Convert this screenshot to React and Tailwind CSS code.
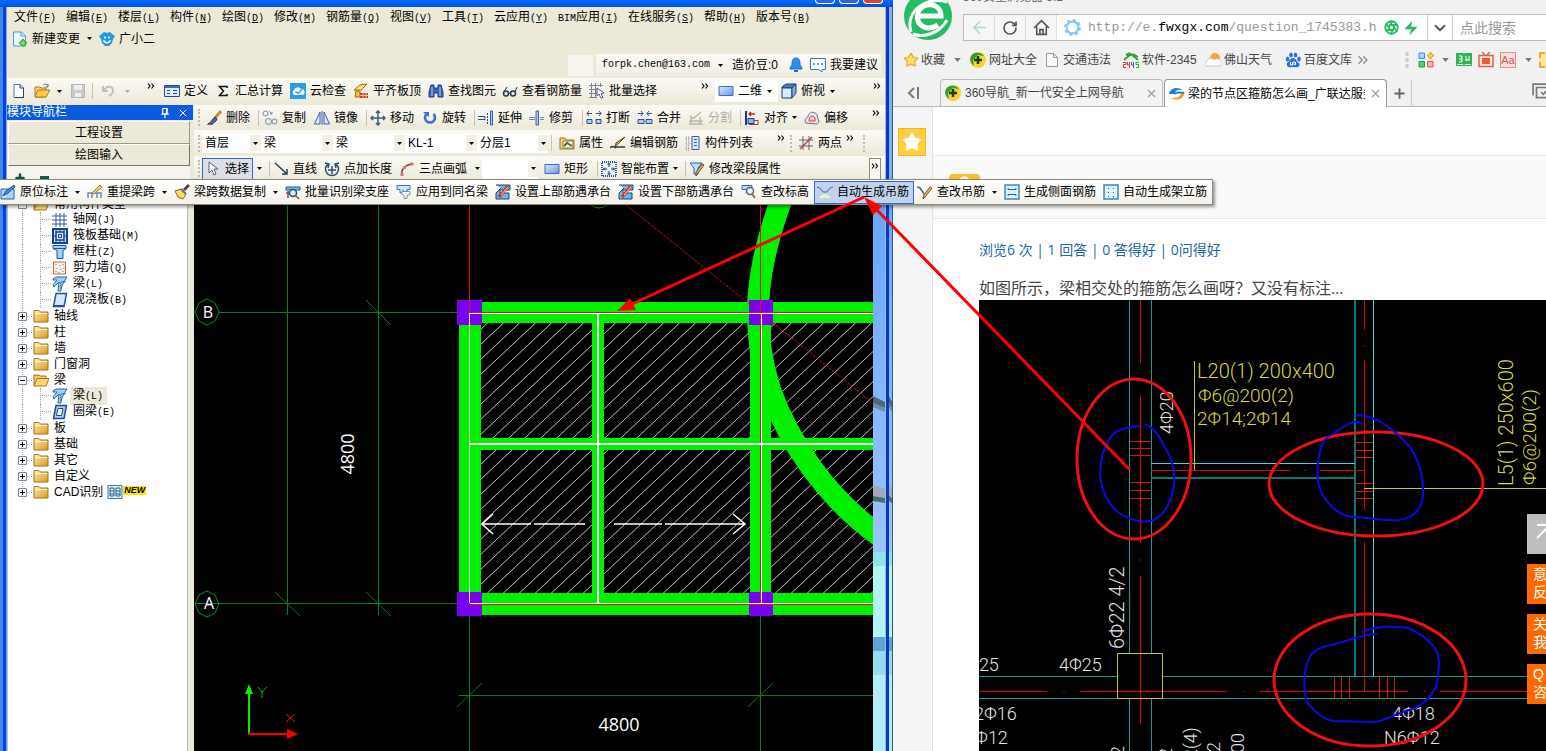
import { RotateCw, House, Star, Plus, X, ChevronDown, ArrowLeft, Settings, Zap, Aperture, ChevronsRight } from 'lucide-react';

const Ico = ({ children, className = 'w-4 h-4' }) => (
    <svg viewBox="0 0 16 16" className={`${className} shrink-0`} fill="none" aria-hidden="true">{children}</svg>
);

const icons = {
    newDoc: <Ico><path d="M1.500 1h8l4 4v10h-12z" fill="#eef6ff" stroke="#4a9ae0" /><path d="M9 1v4h4" stroke="#4a9ae0" /><path d="M11 7.500l4.500 4.500-4.500 4-4.500-4z" fill="#3da52c" /><path d="M11 9.500v5M8.500 12h5" stroke="#8be36a" strokeWidth="1.500" /></Ico>,
    robot: <Ico><path d="M3 3l2-2 3 1 3-1 2 2 3 2-2 3-1 4-3 3H6l-3-3-1-4-2-3z" fill="#1d9be0" /><path d="M6 5.500v2M10 5.500v2" stroke="#fff" strokeWidth="1.500" /><path d="M4.500 9.500c2 3 5 3 7 0" stroke="#fff" strokeWidth="1.500" /></Ico>,
    page: <Ico><path d="M3 1.500h6l3.500 3.500v9.500H3z" fill="#fff" stroke="#5872a8" /><path d="M9 1.500V5h3.500v9.500H4" stroke="#2c4478" /></Ico>,
    open: <Ico><path d="M1 4h5l1 1h5v9H1z" fill="#f7d373" stroke="#a8791c" /><path d="M4 7h12l-4 7H1z" fill="#ffc94c" stroke="#a8791c" /><path d="M9 2c2-1.500 4-1 5 1M14 1v3h-3" stroke="#5478b0" /></Ico>,
    save: <Ico><path d="M1.500 1.500h13v13h-13z" fill="#c9c9c5" stroke="#b4b4b0" /><path d="M4 2h8v5H4zM5 10h6v4H5z" fill="#eee" /></Ico>,
    undo: <Ico><path d="M3 3v5h5M4 7c3-5 9-4 9 1 0 3-2 4-4 5" stroke="#c3c1b8" strokeWidth="2" /></Ico>,
    form: <Ico><path d="M.5 2.500h15v11H.5z" fill="#dcebff" stroke="#27498f" /><path d="M1 3h14v2H1z" fill="#3e6bc0" /><path d="M3 7.500h3M3 10.500h3M9 7.500h4M9 10.500h4" stroke="#27498f" /></Ico>,
    sigma: <Ico><path d="M12 5V3.500H4.500L8.500 8l-4 4.500H12V11" stroke="#111" strokeWidth="1.500" /></Ico>,
    cloud: <Ico><path d="M0 0h16v16H0z" fill="#2a9fe0" /><path d="M4 12a3 3 0 0 1 0-5 4 4 0 0 1 7-1 3 3 0 0 1 1 6z" fill="#fff" /><path d="M5.500 8.500L8 10.500l4-4" stroke="#2a9fe0" strokeWidth="1.500" /></Ico>,
    slab: <Ico><path d="M1 7l6-5 7-1-6 6z" fill="#ffe27a" stroke="#9c6b12" /><path d="M3 8h4v6H2z" fill="#f5c542" stroke="#9c6b12" /><path d="M7 10h8v5H7z" fill="#b5402c" /><path d="M7 12.500h8M10 10v5M13 10v5" stroke="#f3c1a0" /></Ico>,
    binoc: <Ico><path d="M3 2h3v3h4V2h3l2 7v5h-5v-4H6v4H1V9z" fill="#3a63b5" stroke="#1e3d80" /><path d="M4 4v9M12 4v9" stroke="#b9d1ff" /></Ico>,
    glasses: <Ico><circle cx="4" cy="10.500" r="2.500" stroke="#2b3a55" strokeWidth="1.500" /><circle cx="11" cy="10.500" r="2.500" stroke="#2b3a55" strokeWidth="1.500" /><path d="M2 9l3-5M13 9l2-5M6.500 10h2" stroke="#2b3a55" /></Ico>,
    pick: <Ico><path d="M0 2.500h14M0 6.500h8M0 10.500h8M0 14.500h8M2.500 0v15M6.500 0v15M11.500 0v4" stroke="#7b8290" /><path d="M8 5l7 5-3 .5 2 4-2 .5-2-4-2 2z" fill="#fff" stroke="#4c5e87" /></Ico>,
    rect: <Ico><defs><linearGradient id="rg" x2="1" y2="1"><stop stopColor="#dbe8ff" /><stop offset="1" stopColor="#6d95e6" /></linearGradient></defs><path d="M1 3.500h14v9H1z" fill="url(#rg)" stroke="#4068bb" /></Ico>,
    cube: <Ico><path d="M1 4l4-3h10l-4 4H1z" fill="#4b7cc0" stroke="#1f3b66" /><path d="M1 5h10v10H1z" fill="#d3eaff" stroke="#1f3b66" /><path d="M11 5l4-4v9l-4 5z" fill="#7fb2e0" stroke="#1f3b66" /></Ico>,
    brush: <Ico><path d="M15 1L9 8" stroke="#c98e38" strokeWidth="3" /><path d="M9 7l2 2c-1 3-5 6-9 5 3-1 4-5 7-7z" fill="#53639a" stroke="#2c3866" /><path d="M1 14.500h6" stroke="#b05070" /></Ico>,
    copy: <Ico><circle cx="3.500" cy="3.500" r="2.500" stroke="#7386aa" /><circle cx="6.500" cy="11.500" r="3" stroke="#7386aa" /><circle cx="12.500" cy="11.500" r="2.500" stroke="#7386aa" /><path d="M7 1l3 3M10 2v2H8" stroke="#7386aa" /></Ico>,
    mirror: <Ico><path d="M6 2v12H.5zM10 2v12h5.500z" fill="#dce8ff" stroke="#3b5fa8" /><path d="M8 1v14" stroke="#3b5fa8" /></Ico>,
    move: <Ico><path d="M8 1v14M1 8h14M6 3l2-2 2 2M6 13l2 2 2-2M3 6L1 8l2 2M13 6l2 2-2 2" stroke="#44597f" strokeWidth="1.500" /></Ico>,
    rotate: <Ico><path d="M11.500 4a5 5 0 1 1-7 0" stroke="#3d6fc4" strokeWidth="2.500" /><path d="M1 2h6v5z" fill="#3d6fc4" /></Ico>,
    extend: <Ico><path d="M0 6.500h7v3H0" stroke="#274b86" /><path d="M9.500 3v11" stroke="#274b86" strokeDasharray="2 1" /><path d="M12.500 1h2v14h-2z" fill="#9ec3ef" stroke="#3767b3" /></Ico>,
    trim: <Ico><path d="M0 7.500h6M0 9.500h6M11 7.500h4M11 9.500h4" stroke="#6f87a9" /><path d="M7 1h2.500v14H7z" fill="#a9c6e8" stroke="#46658f" /></Ico>,
    split: <Ico><path d="M1 3.500h5M3 1L1 3.500 3 6M10 3.500h5M13 1l2 2.500L13 6" stroke="#2e4f88" /><path d="M1 9.500h5v4H1zM10 9.500h5v4h-5z" fill="#a9cdf5" stroke="#2e4f88" /></Ico>,
    merge: <Ico><path d="M1 3.500h5M4 1l2 2.500L4 6M10 3.500h5M12 1l-2 2.500L12 6" stroke="#2e4f88" /><path d="M1 9.500h6v4H1zM9 9.500h6v4H9z" fill="#a9cdf5" stroke="#2e4f88" /></Ico>,
    cut: <Ico><path d="M1 11h14M1 14h14M3 7v7M12 7v7M5 9l8-7M2 6l4 3" stroke="#b9b7ae" strokeWidth="1.500" /></Ico>,
    align: <Ico><path d="M2 1v14" stroke="#173a8c" strokeWidth="2" /><path d="M5 4h6M7 2L5 4l2 2" stroke="#c02a36" strokeWidth="1.500" /><path d="M4 8.500h6v5H4z" fill="#8fb4ef" stroke="#173a8c" /><path d="M10 10.500h4v4H5" stroke="#c02a36" /></Ico>,
    offset: <Ico><path d="M2 13c-2-3 0-5 2-6 0-4 4-6 7-4 3 1 2 4 3 6 2 3 0 5-2 5z" stroke="#5f6c93" fill="#eee6ee" /><path d="M5 11c0-3 1-5 3-5s4 2 3 5z" stroke="#c04b4b" fill="#f7c4bd" /></Ico>,
    prop: <Ico><path d="M1 3h5l1 2h8v9H1z" fill="#f7d57b" stroke="#9a7431" /><path d="M4 6h10v7H4z" fill="#fffbe8" stroke="#9a7431" /><path d="M5 11l3-3 5 3" stroke="#3a6e40" strokeWidth="2" /></Ico>,
    pen: <Ico><path d="M15 2L8 9l-3 3 1-4z" fill="#d7a755" stroke="#5d4526" /><path d="M0 13c3-4 5 1 7-1h8" stroke="#333" strokeWidth="1.500" /></Ico>,
    list: <Ico><path d="M1 2h3v3H1zM1 7h3v3H1zM1 12h3v3H1z" stroke="#7b8797" strokeDasharray="1 1" /><path d="M7 1.500h7v13H7z" fill="#d8e5fa" stroke="#3c5f9c" /><path d="M9 4.500h3M9 7.500h3M9 10.500h3" stroke="#3c5f9c" /></Ico>,
    points: <Ico><path d="M5 1v14M11 1v14M1 5h14M1 11h14" stroke="#61656f" /><path d="M2 14L14 2" stroke="#b84040" strokeWidth="1.500" /></Ico>,
    cursor: <Ico><path d="M4 1v11l3-3 2 5 2-1-2-5h4z" fill="#fff" stroke="#55617c" /></Ico>,
    line: <Ico><path d="M2 2l12 11M14 8v5H9" stroke="#273c63" strokeWidth="1.500" /></Ico>,
    pointLen: <Ico><path d="M4 3a6.500 6.500 0 1 0 8 0M8 5v8M4 9h8M1 2l4 1-1 4M15 2l-4 1 1 4" stroke="#2e4975" strokeWidth="1.500" /></Ico>,
    arc: <Ico><path d="M3 14C2 8 6 4 13 3" stroke="#ac3a3a" strokeWidth="1.500" /><path d="M1.500 12h3v3h-3zM11.500 1.500h3v3h-3zM4 5h3v3H4z" fill="#d07a7a" /></Ico>,
    smart: <Ico><path d="M1 1h14v14H1z" stroke="#2e5595" strokeWidth="2" strokeDasharray="1 1" fill="#e6f1ff" /><path d="M8 2v4M8 10v4M2 8h4M10 8h4M6.500 4L8 2.500 9.500 4M6.500 12L8 13.500 9.500 12M4 6.500L2.500 8 4 9.500M12 6.500L13.500 8 12 9.500" stroke="#1c345f" /></Ico>,
    beamPen: <Ico><path d="M1 2h12L9 7v6H5V7z" fill="#bfe0fb" stroke="#2d64ab" /><path d="M15 4l-6 8-2 3 0-4 6-8z" fill="#f1b464" stroke="#5d4526" /></Ico>,
    mark: <Ico><path d="M1 5h13v10H1z" fill="#a7d2fa" stroke="#2467b0" /><path d="M3 12l3-5 8-6 1 2-7 6z" fill="#4d8edb" stroke="#1c4c8c" /><path d="M3 13l3-1" stroke="#fff" /></Ico>,
    span: <Ico><path d="M1 14V9h13v5M5 9v5M10 9v5" stroke="#6c85bd" strokeWidth="1.500" /><path d="M5 9l8-8 2 2-8 7z" fill="#f6d069" stroke="#8c7742" /></Ico>,
    broom: <Ico><path d="M15 1l-5 5" stroke="#5b4632" strokeWidth="3" /><path d="M1 7l6-2 5 5-3 5-5-2z" fill="#ffdb61" stroke="#8a6b24" /><path d="M7 5l5 5" stroke="#4c69a8" strokeWidth="2" /></Ico>,
    scan: <Ico><path d="M1 3h14v3H1z" fill="#78b4ee" stroke="#235a9e" /><circle cx="8" cy="9" r="3.500" fill="#d7eeff" stroke="#275083" strokeWidth="1.500" /><path d="M10 11l4 4M3 7v7M1 9h3" stroke="#9a4e34" strokeWidth="1.500" /></Ico>,
    apply: <Ico><path d="M1 1.500h13v4h-3V9" stroke="#3874b6" fill="#c9e6ff" /><path d="M1 1.500v4h3V9h3V5.500" fill="#c9e6ff" stroke="#3874b6" /><path d="M6 7.500h8v3l-3 1v3H8v-3l-2-1z" fill="#fff" stroke="#7a8ba5" /></Ico>,
    cap: <Ico><path d="M1 1h14v5H5v3h9v6H1V9l5-5" fill="#71b3e7" stroke="#16467e" /><path d="M13 2L4 13" stroke="#d4341b" strokeWidth="3" /><path d="M13 3L6 11" stroke="#ffe1c4" /></Ico>,
    elev: <Ico><path d="M1 1.500h10v4H1z" fill="#bcd9f7" stroke="#3c6ba4" /><circle cx="9" cy="7" r="3.500" fill="#e8f6ff" stroke="#54657e" strokeWidth="1.500" /><path d="M11 10l3 4" stroke="#9c6b32" strokeWidth="2" /></Ico>,
    hang: <Ico><path d="M0 3l3 1 3 4h4l3-4 3-1" stroke="#3b6cbb" /><path d="M2 14c2-3 4-4 6-4s4 1 6 4z" fill="#e4f8b8" /></Ico>,
    hangPen: <Ico><path d="M0 3l3 1 4 6h3" stroke="#4468a8" strokeWidth="1.500" /><path d="M15 4l-6 8-3 3 1-4 6-8z" fill="#f3b35d" stroke="#7c5323" /></Ico>,
    side: <Ico><path d="M1 1h14v14H1z" fill="#def2ff" stroke="#3f87c6" strokeWidth="1.500" /><path d="M4 5.500h8M4 10.500h8M4 4v1.500M12 4v1.500M4 12v-1.500M12 12v-1.500" stroke="#2a5e9a" /></Ico>,
    stand: <Ico><path d="M1 1h14v14H1z" fill="#def2ff" stroke="#3f87c6" strokeWidth="1.500" /><path d="M5.500 4v9M10.500 4v9" stroke="#2a5e9a" strokeDasharray="1 3" /></Ico>,
    axisNet: <Ico><path d="M4 1v14M8 1v14M12 1v14M0 4h15M0 8h15M0 12h15" stroke="#2c59a8" /></Ico>,
    raft: <Ico><path d="M1 1h14v14H1z" fill="#cfe5ff" stroke="#16438e" strokeWidth="2" /><path d="M4 4h8v8H4z" stroke="#16438e" strokeWidth="1.500" /><path d="M6.500 6.500h3v3h-3zM4 0v4M8 0v4M12 0v4M4 12v4M8 12v4M12 12v4M0 8h4M12 8h4" stroke="#16438e" /></Ico>,
    column: <Ico><path d="M1 1.500h13v3l-3 2v8H5v-8l-4-2z" fill="#a6cdf8" stroke="#23529d" /><path d="M2 4.500h12" stroke="#23529d" /></Ico>,
    shear: <Ico><path d="M1.500 2h12v12h-12z" fill="#f4efe9" stroke="#c46a33" /><path d="M4 4v1M8 5v1M11 4v1M5 8v1M9 9v1M4 11v1M7 12v1M11 11v1M12 8v1" stroke="#777" /></Ico>,
    beam: <Ico><path d="M1 3l3-2h11l-2 3v2H9v9H6l1-9-5 5-1-2 4-5H1z" fill="#9dd0f5" stroke="#2966a6" /><path d="M12 5l-3 8" stroke="#2966a6" /></Ico>,
    plate: <Ico><path d="M4 1.500h10.500L12 14.500H1.500z" fill="#d4e8ff" stroke="#23529d" strokeWidth="1.500" /><path d="M2 14h10" stroke="#23529d" strokeWidth="2" /></Ico>,
    ring: <Ico><path d="M4 1.500h10.500L12 14.500H1.500z" fill="#a9cdf5" stroke="#1f4a96" strokeWidth="1.500" /><path d="M6 4.500h5L9.500 11.500h-5z" fill="#fff" stroke="#1f4a96" /></Ico>,
    folder: <Ico><defs><linearGradient id="fg" x2="1" y2="1"><stop stopColor="#ffe9ac" /><stop offset="1" stopColor="#d99a24" /></linearGradient></defs><path d="M1 4V2.500h5L7.500 4H15v10H1z" fill="url(#fg)" stroke="#a77318" /><path d="M2 5.500h12" stroke="#fff2c9" /></Ico>,
    folderOpen: <Ico><path d="M1 3h5l1 1h6v9H1z" fill="#f2ca67" stroke="#a77318" /><path d="M4 6.500h12L13 14H1z" fill="#ffd768" stroke="#a77318" /></Ico>,
    cad: <Ico><path d="M1 1.500h14v13H1z" fill="#dff1fb" stroke="#3d7ba8" /><path d="M3 4h4v8H3zM9 4h4v8H9z" stroke="#1d5f90" /><path d="M3 7h4M9 7h4M3 10h4M9 10h4" stroke="#1d5f90" /></Ico>,
    nav360: <Ico><circle cx="8" cy="8" r="8" fill="#f7d32b" /><path d="M1 4a8 8 0 0 1 13 0L8 3 3 8l1 6A8 8 0 0 1 1 4z" fill="#2d9d36" /><path d="M8 4v8M4 8h8" stroke="#1b3a1a" strokeWidth="2.500" /></Ico>,
    sheet: <Ico><path d="M2.500 1.500h7l4 4v9h-11zM9.500 1.500v4h4" fill="#fafafa" stroke="#9a9a9a" /></Ico>,
    n2345: <Ico><path d="M1 8l7-6 7 6M3 3l4-2M10 2l5 3" stroke="#38a52d" strokeWidth="2" /><path d="M0 10.500h3v2H.5v3H3M4.500 10v3H7M6.500 10v6" stroke="#d3352b" /><path d="M8.500 10v3H11M10.500 10v6" stroke="#3064c8" /><path d="M16 10.500h-3v2h2.500v3H13" stroke="#3aa83a" /></Ico>,
    weather: <Ico><circle cx="10" cy="6" r="5" fill="#f8a23a" /><path d="M1 14a3 3 0 0 1 1-5 4 4 0 0 1 7-1 4 4 0 0 1 6 6z" fill="#fff" stroke="#c5c8cc" /></Ico>,
    paw: <Ico><g fill="#2c6fdf"><ellipse cx="2.500" cy="7" rx="1.800" ry="2.500" /><ellipse cx="6" cy="3" rx="1.800" ry="2.500" /><ellipse cx="10.500" cy="3" rx="1.800" ry="2.500" /><ellipse cx="14" cy="7" rx="1.800" ry="2.500" /><path d="M8 6c3 0 3 3 6 5 2 4-2 5-6 4-4 1-7 0-6-4 3-2 3-5 6-5z" /></g><path d="M5.500 10v3h2v-3M9 9v4M10.500 10v3" stroke="#fff" /></Ico>,
    glodon: <Ico><path d="M0 8C1 2 8 0 14 4c-4-1-8 0-9 4z" fill="#2080d2" /><path d="M15 5c2 7-6 11-13 7 6 0 9-1 10-4z" fill="#f3a02b" /><path d="M5 8c2-2 5-2 10-1" stroke="#2080d2" strokeWidth="2" /></Ico>,
    apps: <Ico><path d="M1 1h5.500v5.500H1z" fill="#a7d3f5" stroke="#3f92d8" /><path d="M1 9.500h5.500V15H1z" fill="#5bcb7b" stroke="#1ea04a" /><path d="M9.500 9.500H15V15H9.500z" fill="#fbb1a5" stroke="#e05a48" /><path d="M12.500 0l1.200 2.300L16 3.500l-2.300 1.200L12.500 7l-1.200-2.300L9 3.500l2.300-1.200z" fill="#ffd44a" stroke="#dd9b12" /></Ico>,
    book: <Ico><path d="M0 1h7l1 1 1-1h7v13H9l-1 1-1-1H0z" fill="#2fb35a" /><path d="M3 4h3v6H3M3 7h3M10 4v5l1.500-2L13 9V4" stroke="#fff" /><path d="M1 12.500h6l1 1 1-1h6" stroke="#c9f0d4" /></Ico>,
    tv: <Ico><path d="M4 0l3 3M12 0L9 3M1 3.500h14v11H1z" stroke="#f05a3c" strokeWidth="1.500" /><path d="M4 6h8v6H4z" fill="#f05a3c" /></Ico>,
    bell: <Ico><path d="M8 1c4 0 4 4 4 7l2 3v1H2v-1l2-3c0-3 0-7 4-7z" fill="#2f8de8" stroke="#2070c4" /><path d="M6 14h4" stroke="#2070c4" strokeWidth="2" /></Ico>,
    chat: <Ico><path d="M.5 1.500h15v11H12V15l-3-2.500H.5z" fill="#fff" stroke="#3c7bc4" /><path d="M3 7h2M7 7h2M11 7h2" stroke="#3c7bc4" strokeWidth="1.500" /></Ico>,
};

const Caret = ({ className = 'text-black' }) => (
    <svg viewBox="0 0 5 3" className={`w-[5px] h-[3px] shrink-0 ${className}`} aria-hidden="true"><path d="M0 0h5L2.500 3z" fill="currentColor" /></svg>
);

const More = ({ className = '' }) => (
    <button type="button" aria-label="更多" className={`flex items-start shrink-0 w-2 h-4 ${className}`}>
        <svg viewBox="0 0 8 6" className="w-2 h-[6px]" fill="none"><path d="M1 .5l2 2.500L1 5.500M4.500 .5l2 2.500-2 2.500" stroke="#000" strokeWidth="1.200" /></svg>
    </button>
);

const Tool = ({ icon, label, w = '', arrow, caretGap = 'ml-1', disabled, on }) => (
    <button
        type="button"
        disabled={disabled}
        className={`flex items-center gap-1 shrink-0 whitespace-nowrap h-[22px] ${w} ${disabled ? 'text-[#b1afa4]' : ''} ${on ? 'bg-[#dcdfe6] outline outline-1 -outline-offset-1 outline-[#316ac5]' : ''}`}
    >
        {icons[icon]}
        {label && <span>{label}</span>}
        {arrow && <span className={caretGap}><Caret /></span>}
    </button>
);

const Sep = () => <span className="w-[7px] h-4 shrink-0 flex justify-center"><span className="w-px bg-[#c5c2b2]" /></span>;
const Grip = ({ className = 'ml-1 mr-[6px]' }) => <span className={`w-0 h-[17px] shrink-0 border-l-2 border-dotted border-[#c0bdab] ${className}`} />;

const Combo = ({ name, value, w }) => (
    <label className={`relative flex items-center shrink-0 h-[20px] bg-white ${w}`}>
        <select aria-label={name} className="appearance-none w-full bg-transparent pl-[3px] outline-none text-xs leading-4">
            <option>{value}</option>
        </select>
        <span className="absolute right-0 w-[10px] h-[16px] bg-[#f3f1e6] flex items-center justify-center pointer-events-none"><Caret /></span>
    </label>
);

const menus = [
    ['文件', 'F', 'w-[52px]'], ['编辑', 'E', 'w-[52px]'], ['楼层', 'L', 'w-[52px]'], ['构件', 'N', 'w-[52px]'],
    ['绘图', 'D', 'w-[52px]'], ['修改', 'M', 'w-[52px]'], ['钢筋量', 'Q', 'w-[64px]'], ['视图', 'V', 'w-[52px]'],
    ['工具', 'T', 'w-[52px]'], ['云应用', 'Y', 'w-[64px]'], ['BIM应用', 'I', 'w-[70px]'], ['在线服务', 'S', 'w-[76px]'],
    ['帮助', 'H', 'w-[52px]'], ['版本号', 'B', 'w-[64px]'],
];

const mono = "font-['Liberation_Mono','Noto_Sans_CJK_SC',monospace]";

const tree = [
    { label: '常用构件类型', icon: 'folderOpen', open: true },
    { label: '轴网', hot: 'J', icon: 'axisNet', sub: true },
    { label: '筏板基础', hot: 'M', icon: 'raft', sub: true },
    { label: '框柱', hot: 'Z', icon: 'column', sub: true },
    { label: '剪力墙', hot: 'Q', icon: 'shear', sub: true },
    { label: '梁', hot: 'L', icon: 'beam', sub: true },
    { label: '现浇板', hot: 'B', icon: 'plate', sub: true },
    { label: '轴线', icon: 'folder' },
    { label: '柱', icon: 'folder' },
    { label: '墙', icon: 'folder' },
    { label: '门窗洞', icon: 'folder' },
    { label: '梁', icon: 'folderOpen', open: true },
    { label: '梁', hot: 'L', icon: 'beam', sub: true, active: true },
    { label: '圈梁', hot: 'E', icon: 'ring', sub: true },
    { label: '板', icon: 'folder' },
    { label: '基础', icon: 'folder' },
    { label: '其它', icon: 'folder' },
    { label: '自定义', icon: 'folder' },
    { label: 'CAD识别', icon: 'folder', isNew: true },
];

const TreeRow = ({ row }) => (
    <li className="flex items-center h-4 pl-[10px]">
        {row.sub ? (
            <span className="flex w-[34px] h-4 shrink-0">
                <span className="w-[5px] h-4 border-r border-dotted border-[#a5a5a5]" />
                <span className="w-[18px] h-4 border-r border-dotted border-[#a5a5a5]" />
                <span className="w-[10px] h-2 border-b border-dotted border-[#a5a5a5]" />
            </span>
        ) : (
            <svg viewBox="0 0 15 16" className="w-[15px] h-4 shrink-0" fill="none">
                <path d="M4.500 0v16M9 8.500h6" stroke="#a5a5a5" strokeDasharray="1 1" />
                <path d="M.5 4.500h8v8h-8z" fill="#fff" stroke="#7b8ca3" />
                <path d={row.open ? 'M2 8.500h5' : 'M2 8.500h5M4.500 6v5'} stroke="#000" />
            </svg>
        )}
        <button type="button" className="flex items-center whitespace-nowrap h-4">
            {icons[row.icon]}
            <span className={`ml-[2px] pl-[3px] pr-1 leading-4 ${row.active ? 'bg-[#ece9d8]' : ''}`}>
                {row.label}
                {row.hot && <span className={`text-[10px] ${mono}`}>({row.hot})</span>}
            </span>
            {row.isNew && <>{icons.cad}<b className="mb-1 text-[9px] italic leading-[9px] bg-[#ffe600] px-px">NEW</b></>}
        </button>
    </li>
);

const NavPanel = () => (
    <aside className="w-[186px] shrink-0 flex flex-col mr-[1px]">
        <header className="h-[15px] bg-[#0a5be0] text-white flex items-center">
            <h2 className="flex-1 leading-[15px]">模块导航栏</h2>
            <button type="button" aria-label="固定" className="w-[18px]"><Ico className="w-3 h-3"><path d="M5 2h6v7H5zM3 9.500h10M8 10v5M10 2v7" stroke="#fff" strokeWidth="1.500" /></Ico></button>
            <button type="button" aria-label="关闭" className="w-[16px]"><X size={12} /></button>
        </header>
        <button type="button" className="h-[23px] mt-px ml-[1px] mr-[3px] pt-[1px] bg-[#ece9d8] border border-t-white border-l-white border-r-[#9b9885] border-b-[#9b9885]">工程设置</button>
        <button type="button" className="h-[22px] ml-[1px] mr-[3px] bg-[#ece9d8] border border-t-white border-l-white border-r-[#77756a] border-b-[#77756a]">绘图输入</button>
        <div className="h-[29px] pl-[7px] pt-[6px] flex gap-[14px] bg-[#f5f4ee] text-[#0b5a4c] mr-[3px]">
            <Plus size={12} strokeWidth={5} />
            <span className="w-[9px] h-1 mt-1 bg-[#0b5a4c]" />
        </div>
        <ul className="flex-1 bg-white border-x border-[#a9bcd4] mr-[3px] w-[181px] pt-px">
            {tree.map((row, i) => <TreeRow key={i} row={row} />)}
        </ul>
    </aside>
);

const cells = [[481, 323, 111, 115], [604, 323, 146, 115], [771, 323, 102, 115], [481, 450, 111, 143], [604, 450, 146, 143], [771, 450, 102, 143]];

const PlanCanvas = () => (
    <svg viewBox="194 181 679 570" preserveAspectRatio="xMinYMin slice" className="flex-1 min-w-0 h-full bg-black" fill="none" role="img" aria-label="梁平面图">
        <defs>
            <pattern id="hatch" width="16" height="15" patternUnits="userSpaceOnUse">
                <path d="M-1 16L17 -1M-1 1L1 -1M15 16L17 14" stroke="#c8c8c8" strokeWidth="1" />
            </pattern>
        </defs>
        {cells.map(([x, y, width, height]) => <rect key={`${x}-${y}`} x={x} y={y} width={width} height={height} fill="url(#hatch)" />)}
        <g stroke="#0a7d1c" shapeRendering="crispEdges">
            <path d="M287.500 181V615M378.500 181V615M219 312.500H459M195 603.500H459M469.500 615V751M760.500 615V751M459 695.500H873" />
        </g>
        <path d="M275 592L300 616M366 592L391 616M366 300L391 325M457 707L482 683M748 707L773 683" stroke="#0a7d1c" />
        <path d="M199 303l8-4 8 4 4 9-4 9-8 4-8-4-4-9zM199 595l8-4 8 4 4 9-4 9-8 4-8-4-4-9z" stroke="#0a8a20" />
        <circle cx="599" cy="196" r="12" stroke="#0a8a20" />
        <path d="M785 190C758 260 748 320 770 390C788 440 825 498 884 539" stroke="#00f000" strokeWidth="22" />
        <g fill="#00f000" shapeRendering="crispEdges">
            <path d="M459 302H873V323H459zM459 593H873V615H459zM459 302H481V615H459zM750 302H771V615H750zM592 323H604V593H592zM481 438H873V450H481z" />
        </g>
        <g fill="#7a00f0"><path d="M457 300h25v25h-25zM749 300h24v25h-24zM457 592h25v24h-25zM749 592h24v24h-24z" /></g>
        <path d="M626 205L873 403" stroke="#c01010" strokeDasharray="3 1" />
        <g shapeRendering="crispEdges">
            <path d="M469.500 181V313M760.500 181V603M470 312.500H873M470 604.500H873" stroke="#e01010" />
            <path d="M469.500 313V603M761.500 313V603M470 313.500H873M470 603.500H873" stroke="#fff" />
            <path d="M598 314V603M470 444H873" stroke="#fff" strokeWidth="2" />
        </g>
        <path d="M482 524H531M534 524H585M614 524H662M665 524H745M493 514L482 524l11 10M733 514l12 10-12 10" stroke="#fff" strokeWidth="1.500" />
        <path d="M249 735V690" strokeWidth="2" stroke="#00f000" />
        <path d="M248 734H292" strokeWidth="2" stroke="#f00" />
        <path d="M245 694l4-10 4 10z" fill="#00f000" /><path d="M287 729l11 5-11 5z" fill="#f00" />
        <path d="M258 687l4 5 5-5M262 692v6" stroke="#00c020" /><path d="M286 714l9 8M295 714l-9 8" stroke="#f01010" />
        <g fill="#fff" fontFamily="'Open Sans', 'Noto Sans', sans-serif" fontSize="18" textAnchor="middle">
            <text x="208" y="318" fontSize="16">B</text>
            <text x="209" y="609" fontSize="16">A</text>
            <text x="619" y="731">4800</text>
            <text transform="translate(354 454) rotate(-90)">4800</text>
        </g>
    </svg>
);

const toolRows = 'flex items-center bg-gradient-to-b from-[#fbfaf6] to-[#ece9d8] overflow-hidden';

const DraftWindow = () => (
    <section className="flex flex-col min-w-0 overflow-hidden text-xs leading-4 text-black bg-[#ece9d8]">
        <div className="h-[7px] shrink-0 bg-gradient-to-b from-[#0a6bff] to-[#0050dc] flex justify-end gap-1 pr-[10px] items-start">
            <button type="button" aria-label="最小化" className="w-5 h-1 rounded-b bg-[#2b66e0] border border-t-0 border-white" />
            <button type="button" aria-label="最大化" className="w-5 h-1 rounded-b bg-[#2b66e0] border border-t-0 border-white" />
            <button type="button" aria-label="关闭" className="w-5 h-1 rounded-b bg-[#d6492a] border border-t-0 border-white" />
        </div>
        <div className="flex-1 flex min-h-0">
            <div className="w-[3px] bg-[#3f88ee] shrink-0" />
            <div className="w-[4px] bg-[#0a3fd6] border-r border-[#7aa4ee] shrink-0" />
            <div className="flex-1 min-w-0 flex flex-col">
                <nav className="flex items-center h-[22px] pl-[7px] shrink-0">
                    {menus.map(([label, hot, w]) => (
                        <button key={label} type="button" className={`${w} shrink-0 text-left whitespace-nowrap`}>
                            {label.startsWith('BIM') ? <><span className={`text-[10px] ${mono}`}>BIM</span>应用</> : label}
                            <span className={`text-[10px] ${mono}`}>(<u>{hot}</u>)</span>
                        </button>
                    ))}
                </nav>
                <div className="flex items-center h-[19px] pl-[5px] shrink-0">
                    <Tool icon="newDoc" label="新建变更" arrow w="w-[87px]" caretGap="ml-[3px]" />
                    <Tool icon="robot" label="广小二" />
                </div>
                <div className="flex items-center justify-end h-[30px] shrink-0 pt-1 pr-1">
                    <span className="w-[25px] h-[21px] bg-[#f5f4ee] mr-[3px]" />
                    <div className="flex items-center h-[22px] bg-gradient-to-b from-[#fbfaf6] to-[#f0eee2] pl-[6px] pr-[3px]">
                        <button type="button" className={`flex items-center w-[130px] text-[10px] ${mono}`}>forpk.chen@163.com<span className="ml-[8px]"><Caret /></span></button>
                        <span className="w-[56px]">造价豆:0</span>
                        <button type="button" aria-label="通知" className="w-[22px]">{icons.bell}</button>
                        <Tool icon="chat" label="我要建议" />
                    </div>
                </div>
                <div className={`h-[26px] mb-px shrink-0 ${toolRows}`}>
                    <Tool icon="page" w="w-[23px] ml-1" />
                    <Tool icon="open" arrow w="w-[36px]" caretGap="ml-[3px]" />
                    <Tool icon="save" disabled w="w-[19px]" />
                    <Sep />
                    <Tool icon="undo" disabled w="w-[25px] ml-1" />
                    <Caret className="text-[#b1afa4]" />
                    <More className="ml-[17px] mr-[9px]" />
                    <Tool icon="form" label="定义" w="w-[51px]" />
                    <Tool icon="sigma" label="汇总计算" w="w-[75px]" />
                    <Tool icon="cloud" label="云检查" w="w-[63px]" />
                    <Tool icon="slab" label="平齐板顶" w="w-[75px]" />
                    <Tool icon="binoc" label="查找图元" w="w-[74px]" />
                    <Tool icon="glasses" label="查看钢筋量" w="w-[87px]" />
                    <Tool icon="pick" label="批量选择" w="w-[80px]" />
                    <More className="ml-auto" />
                    <div className="flex items-center ml-[6px] pl-[3px] bg-white"><Tool icon="rect" label="二维" arrow w="w-[60px]" caretGap="ml-[1px]" /></div>
                    <Tool icon="cube" label="俯视" arrow w="w-[76px] ml-[3px]" caretGap="ml-[1px]" />
                    <More className="ml-[16px] mr-1" />
                </div>
                <div className="flex-1 flex min-h-0">
                    <NavPanel />
                    <div className="flex-1 min-w-0 flex flex-col">
                        <div className={`h-[25px] shrink-0 ${toolRows}`}>
                            <Grip />
                            <Tool icon="brush" label="删除" w="w-[49px]" /><Sep />
                            <Tool icon="copy" label="复制" w="w-[52px]" />
                            <Tool icon="mirror" label="镜像" w="w-[49px]" /><Sep />
                            <Tool icon="move" label="移动" w="w-[52px]" />
                            <Tool icon="rotate" label="旋转" w="w-[49px]" /><Sep />
                            <Tool icon="extend" label="延伸" w="w-[51px]" />
                            <Tool icon="trim" label="修剪" w="w-[50px]" /><Sep />
                            <Tool icon="split" label="打断" w="w-[51px]" />
                            <Tool icon="merge" label="合并" w="w-[51px]" />
                            <Tool icon="cut" label="分割" w="w-[49px]" disabled /><Sep />
                            <Tool icon="align" label="对齐" w="w-[60px]" arrow caretGap="ml-0" />
                            <Tool icon="offset" label="偏移" w="w-[48px]" />
                            <More className="ml-auto mr-[5px]" />
                        </div>
                        <div className={`h-[26px] shrink-0 ${toolRows}`}>
                            <Grip className="ml-1 mr-[2px]" />
                            <div className="flex gap-px">
                                <Combo name="楼层" value="首层" w="w-[58px]" />
                                <Combo name="构件类别" value="梁" w="w-[71px]" />
                                <Combo name="构件类型" value="梁" w="w-[71px]" />
                                <Combo name="构件" value="KL-1" w="w-[71px]" />
                                <Combo name="分层" value="分层1" w="w-[71px]" />
                            </div>
                            <Sep />
                            <Tool icon="prop" label="属性" w="w-[51px] ml-1" />
                            <Tool icon="pen" label="编辑钢筋" w="w-[75px]" />
                            <Tool icon="list" label="构件列表" w="w-[76px]" />
                            <More className="ml-[16px] mr-[5px]" />
                            <Grip className="ml-0 mr-[6px]" />
                            <Tool icon="points" label="两点" w="w-[48px]" />
                            <More className="mr-[9px]" />
                            <Grip className="" />
                        </div>
                        <div className={`h-[25px] shrink-0 ${toolRows}`}>
                            <Grip className="ml-1 mr-[2px]" />
                            <Tool icon="cursor" label="选择" on w="w-[51px] pl-[3px]" />
                            <span className="px-[4px]"><Caret /></span>
                            <Sep />
                            <Tool icon="line" label="直线" w="w-[51px]" />
                            <Tool icon="pointLen" label="点加长度" w="w-[75px]" />
                            <Tool icon="arc" label="三点画弧" arrow w="w-[83px]" />
                            <Combo name="圆弧半径" value="" w="w-[56px] mr-[6px]" />
                            <Tool icon="rect" label="矩形" w="w-[50px]" />
                            <Sep />
                            <Tool icon="smart" label="智能布置" w="w-[81px]" arrow caretGap="ml-0" />
                            <Sep />
                            <Tool icon="beamPen" label="修改梁段属性" />
                            <span className="ml-auto mr-1 h-[22px] pt-[4px] px-px border border-[#8f8c7c] bg-[#f8f7f2]"><More /></span>
                        </div>
                        <div className="flex-1 flex min-h-0 bg-black">
                            <PlanCanvas />
                            <Scenery className="w-[12px]" />
                        </div>
                    </div>
                </div>
            </div>
            <div className="w-[4px] bg-[#0838c4] border-l border-[#9bb8ef] shrink-0" />
            <div className="w-[4px] shrink-0 border-r border-[#35577d] bg-[#7fb2f3] flex flex-col pt-[174px]"><Scenery className="w-[3px]" /></div>
        </div>
    </section>
);

const Scenery = ({ className }) => (
    <svg viewBox="0 181 12 570" preserveAspectRatio="none" className={`flex-none h-full ${className}`}>
        <defs><linearGradient id="sky" x2="0" y2="1"><stop stopColor="#64a4fb" /><stop offset="1" stopColor="#9cc4fa" /></linearGradient></defs>
        <path d="M0 181h12v371H0z" fill="url(#sky)" />
        <path d="M0 396l12 6v6l-12-5z" fill="#4a6878" />
        <path d="M0 403l12 5v4l-12-5z" fill="#6f8d98" />
        <path d="M0 485l12 4v9l-12-2z" fill="#a3a9b4" />
        <path d="M0 496l12 2v5l-12-2z" fill="#456f68" />
        <path d="M0 552h12v199H0z" fill="#b4f4f2" />
        <path d="M0 552h12v14H0z" fill="#8fe4ea" />
        <path d="M0 637h12v14H0z" fill="#5aa7d4" />
        <path d="M0 651h12v24H0z" fill="#94dcee" />
        <path d="M0 675h12v76H0z" fill="#b4ecf8" />
    </svg>
);

const floatTools = [
    ['mark', '原位标注', 'w-[87px]', true], ['span', '重提梁跨', 'w-[87px]', true], ['broom', '梁跨数据复制', 'w-[111px]', true],
    ['scan', '批量识别梁支座', 'w-[111px]'], ['apply', '应用到同名梁', 'w-[99px]'], ['cap', '设置上部筋遇承台', 'w-[123px]'],
    ['cap', '设置下部筋遇承台', 'w-[123px]'], ['elev', '查改标高', 'w-[73px]'], ['hang', '自动生成吊筋', 'w-[100px] pl-[2px] mr-[3px]'],
    ['hangPen', '查改吊筋', 'w-[87px]', true], ['side', '生成侧面钢筋', 'w-[99px]'], ['stand', '自动生成架立筋', 'w-[109px]'],
];

const FloatBar = () => (
    <div className="absolute left-0 top-[179px] h-[26px] flex items-center text-xs text-black bg-gradient-to-b from-white to-[#f3f1e7] border border-l-0 border-[#8d8a7c] shadow-[2px_2px_3px_rgba(0,0,0,0.4)]">
        {floatTools.map(([icon, label, w, arrow]) => (
            <button key={label} type="button" className={`flex items-center gap-1 h-[23px] shrink-0 whitespace-nowrap ${w} ${icon === 'hang' ? 'bg-[#c1d2ee] border border-[#316ac5]' : ''}`}>
                {icons[icon]}<span>{label}</span>{arrow && <span className="ml-[3px]"><Caret /></span>}
            </button>
        ))}
    </div>
);

const Bookmark = ({ icon, label, w }) => (
    <a href="#" className={`flex items-center gap-[3px] shrink-0 whitespace-nowrap ${w}`}>{icons[icon]}{label}</a>
);

const NodePhoto = () => (
    <svg viewBox="979 300 567 451" preserveAspectRatio="xMinYMin slice" className="flex-1 w-full min-h-0 bg-black" fill="none" role="img" aria-label="梁节点图">
        <g shapeRendering="crispEdges">
            <path d="M1129.500 300V653M1151.500 300V653M1129.500 698V751M1151.500 698V751M979 676.500H1117M979 698.500H1117M1163 676.500H1546M1163 698.500H1546" stroke="#159a9a" />
            <path d="M1355 300V676M1151 478H1355" stroke="#0d7878" strokeWidth="2" />
            <path d="M1373.500 300V676M1151 463.500H1355" stroke="#40d8d8" />
            <path d="M1140.500 300V363M1140.500 395V543M1140.500 576V724M1364.500 300V330M1364.500 360V510M1364.500 542V691M979 691.500H1047M1080 691.500H1227M1260 691.500H1408M1440 691.500H1546M1151 470.500H1290M1320 470.500H1364" stroke="#e00000" />
            <path d="M1140.500 378v2M1140.500 559v2M1364.500 345v2M1364.500 526v2M1063 691.500h2M1243 691.500h2M1424 691.500h2M1304 470.500h2" stroke="#a00000" />
            <path d="M1130 441.500h21M1130 448.500h21M1130 455.500h21M1130 482.500h21M1130 490.500h21M1130 498.500h21M1355 442.500h18M1355 450.500h18M1355 457.500h18M1355 483.500h18M1355 491.500h18M1355 498.500h18M1334.500 677v21M1341.500 677v21M1349.500 677v21M1379.500 677v21M1387.500 677v21M1394.500 677v21" stroke="#e01010" />
            <path d="M1117.500 653.500h45v45h-45zM1194.500 361V470M1364 488.500H1546" stroke="#c8c820" />
        </g>
        <g fontFamily="Roboto, sans-serif" fontWeight="300" fontSize="20">
            <g fill="#d8d83a">
                <text x="1197" y="378">L20(1) 200x400</text>
                <text x="1198" y="402" fontSize="19">Φ6@200(2)</text>
                <text x="1197" y="425" fontSize="19">2Φ14;2Φ14</text>
                <text transform="translate(1513 486) rotate(-90)">L5(1) 250x600</text>
                <text transform="translate(1536 485) rotate(-90)" fontSize="19">Φ6@200(2)</text>
                <text transform="translate(1560 485) rotate(-90)" fontSize="19">2Φ18;2Φ18</text>
            </g>
            <g fill="#e4e4e4" fontSize="18">
                <text transform="translate(1173 434) rotate(-90)">4Φ20</text>
                <text transform="translate(1124 649) rotate(-90)" fontSize="20">6Φ22 4/2</text>
                <text x="966" y="671">Φ25</text>
                <text x="1059" y="671">4Φ25</text>
                <text x="974" y="720">2Φ16</text>
                <text x="975" y="744">Φ12</text>
                <text x="1392" y="720">4Φ18</text>
                <text x="1384" y="744">N6Φ12</text>
                <text transform="translate(1197 759) rotate(-90)">2(4)</text>
                <text transform="translate(1220 752) rotate(-90)">2</text>
                <text transform="translate(1244 763) rotate(-90)">200</text>
                <text transform="translate(1124 756) rotate(-90)">2</text>
                <text transform="translate(1172 758) rotate(-90)">2</text>
            </g>
        </g>
        <g stroke="#f01010" strokeWidth="3">
            <ellipse cx="1134" cy="459" rx="57" ry="80" />
            <ellipse cx="1376" cy="484" rx="107" ry="52" />
            <ellipse cx="1370" cy="680" rx="96" ry="66" />
        </g>
        <g stroke="#0a0ae6" strokeWidth="2">
            <path d="M1140 426c-15 1-25 4-30 12-8 12-10 25-10 38 2 15 8 28 18 36 10 7 24 12 36 8 14-8 18-22 20-36 2-16-4-30-12-42-4-8-8-14-17-18" />
            <path d="M1361 423c-10-4-16 4-32 13-6 4-8 10-10 20-3 14-2 30 4 39 8 14 20 22 32 22 16 1 30 4 44 3 14-2 22-10 24-23 1-20-3-36-14-51-8-9-18-18-28-24-10-5-20-8-26-6" />
            <path d="M1377 634c-16 0-30 8-54 13-12 4-16 12-18 26-2 16 0 28 6 34 8 8 12 12 22 14l42 1c12-2 20-8 34-12 14-4 26-16 28-28 2-12 4-26-2-34-8-10-16-16-28-20-14-2-30-2-45 4" />
        </g>
    </svg>
);

const sideTabs = [['意见', '反馈'], ['关注', '我们'], ['Q Q', '咨询']];

const BrowserWindow = () => (
    <section className="flex flex-col min-w-0 overflow-hidden relative bg-[#f1f1f1] text-xs leading-4 text-[#444]">
        <div className="flex shrink-0 h-[42px]">
            <svg viewBox="0 0 50 42" className="w-[50px] h-[42px] ml-[10px] mr-[10px] shrink-0" fill="none" aria-label="360安全浏览器">
                <circle cx="25" cy="16" r="24" fill="#25bb63" />
                <path d="M14 16h24c0-14-19-15-23-3-3 12 8 19 20 12" stroke="#fff" strokeWidth="5" />
                <path d="M8 32C2 12 22-4 44 2M10 34c10 4 26 0 34-14" stroke="#fff" strokeWidth="3" />
            </svg>
            <div className="flex-1 min-w-0 flex flex-col">
                <div className="h-[14px] overflow-hidden text-[#666]"><h1 className="-mt-[11px]">360安全浏览器 8.1</h1></div>
                <div className="h-[27px] flex items-stretch border border-r-0 border-[#bdbdbd] bg-white">
                    <button type="button" aria-label="后退" className="w-[31px] flex items-center justify-center bg-[#f6f6f6] border-r border-[#ddd] text-[#a5dcc0]"><ArrowLeft size={19} /></button>
                    <button type="button" aria-label="刷新" className="w-[31px] flex items-center justify-center bg-[#f6f6f6] border-r border-[#ddd] text-[#555]"><RotateCw size={16} strokeWidth={2.5} /></button>
                    <button type="button" aria-label="主页" className="w-[31px] flex items-center justify-center bg-[#f6f6f6] border-r border-[#ddd] text-[#555]">
                        <Ico className="w-[17px] h-[17px]"><path d="M1 8.500L8 1.500l7 7M3.500 7v7.500h9V7M6.500 14v-4h3v4" stroke="currentColor" strokeWidth="1.500" /></Ico>
                    </button>
                    <span className="w-[31px] flex items-center justify-center">
                        <Ico className="w-[17px] h-[17px]"><circle cx="8" cy="8" r="5.500" stroke="#8cc6f3" strokeWidth="2" /><circle cx="8" cy="8" r="7" stroke="#8cc6f3" strokeWidth="2" strokeDasharray="3 2.500" /></Ico>
                    </span>
                    <div className="relative flex-1 min-w-0 flex items-center overflow-hidden whitespace-nowrap text-[13px] font-['Liberation_Mono',monospace] text-[#999]">
                        <a href="#">http://e.<span className="text-black">fwxgx.com</span>/question_1745383.h</a>
                    </div>
                    <div className="flex items-center gap-1 pl-1 pr-2 text-[#2dbb63]">
                        <Aperture size={15} strokeWidth={3} />
                        <Zap size={16} fill="currentColor" strokeWidth={0} />
                    </div>
                    <button type="button" aria-label="展开" className="w-[26px] flex items-center justify-center border-x border-[#ccc] text-[#555]"><ChevronDown size={18} strokeWidth={2.5} /></button>
                    <input aria-label="搜索" placeholder="点此搜索" className="w-[93px] pl-[7px] text-sm outline-none placeholder:text-[#999]" />
                </div>
            </div>
        </div>
        <div className="h-[36px] shrink-0 flex items-center pl-[10px]">
            <a href="#" className="flex items-center gap-[2px] w-[51px]"><Star size={16} fill="#ffdf70" color="#e5b43a" />收藏</a>
            <Caret className="text-[#777] w-[7px]! h-1! mr-[9px]" />
            <Bookmark icon="nav360" label="网址大全" w="w-[74px]" />
            <Bookmark icon="sheet" label="交通违法" w="w-[79px]" />
            <Bookmark icon="n2345" label="软件-2345" w="w-[82px]" />
            <Bookmark icon="weather" label="佛山天气" w="w-[80px]" />
            <Bookmark icon="paw" label="百度文库" w="w-[70px]" />
            <button type="button" aria-label="更多书签"><ChevronsRight size={16} className="text-[#888]" /></button>
            <div className="ml-auto flex items-center shrink-0 -mr-[9px]">
                <span className="h-4 border-l-4 border-dotted border-[#ccc] mr-[9px]" />
                <span className="w-[24px]">{icons.apps}</span>
                <Caret className="text-[#777] w-[7px]! h-1! mr-[7px]" />
                <span className="w-[22px]">{icons.book}</span>
                <span className="w-[22px]">{icons.tv}</span>
                <span className="w-4 h-4 border border-[#e98c8c] bg-[#fbdede] text-[#cf5a5a] text-[11px] leading-[14px] text-center">Aa</span>
                <Caret className="text-[#777] w-[7px]! h-1! ml-[9px] mr-[7px]" />
                <span className="w-4 h-4 border-2 border-dashed border-[#e6ac33] bg-[#ffe5a0]" />
            </div>
        </div>
        <div className="h-[29px] shrink-0 flex items-end border-b border-[#b9b9b9]">
            <button type="button" aria-label="标签列表" className="w-[47px] h-[27px] pl-3 text-[#777]"><Ico><path d="M9 3L4 8l5 5M13 2v12" stroke="currentColor" strokeWidth="2" /></Ico></button>
            <div className="h-[27px] w-[223px] flex items-center border border-b-0 border-[#bbb] rounded-t px-1 bg-[#f3f3f3]">
                {icons.nav360}<span className="ml-1 flex-1 whitespace-nowrap">360导航_新一代安全上网导航</span>
                <button type="button" aria-label="关闭标签"><X size={13} className="text-[#999]" /></button>
            </div>
            <div className="h-[28px] w-[223px] ml-[1px] -mb-px flex items-center border border-b-0 border-[#999] rounded-t px-1 bg-white text-black">
                {icons.glodon}<span className="ml-[3px] flex-1 overflow-hidden whitespace-nowrap">梁的节点区箍筋怎么画_广联达服务</span>
                <button type="button" aria-label="关闭标签" className="ml-1"><X size={13} className="text-[#999]" /></button>
            </div>
            <button type="button" aria-label="新标签页" className="h-[26px] w-[25px] border-r border-[#ccc] flex items-center justify-center text-[#666]"><Plus size={15} strokeWidth={3} /></button>
            <span className="ml-auto -mr-1 mb-[5px] text-[#777]"><Ico className="w-[18px] h-[18px]"><path d="M1 11V1h12M4 4h12v9H4zM8 8l2 2 3-3" stroke="currentColor" strokeWidth="1.500" /></Ico></span>
        </div>
        <div className="flex-1 flex min-h-0">
            <aside className="w-[40px] shrink-0 bg-[#f4f6f6] border-r border-[#dfe2e2] pt-[21px] pl-[5px]">
                <button type="button" aria-label="收藏夹" className="w-7 h-7 flex items-center justify-center bg-[#ffcf3c] border border-[#f0b826] text-white"><Star size={20} fill="currentColor" /></button>
            </aside>
            <main className="flex-1 min-w-0 flex flex-col bg-white font-['Open_Sans','Noto_Sans_CJK_SC',sans-serif]">
                <div className="h-[48px] shrink-0" />
                <div className="h-[64px] shrink-0 bg-[#f9f9f9] border-y border-[#e6e6e6] pl-[16px] pt-[18px]">
                    <svg viewBox="0 0 31 20" className="w-[31px] h-5" fill="none" aria-hidden="true">
                        <rect width="31" height="20" rx="4" fill="#f5c12e" />
                        <path d="M11 8c0-6 9-6 9 0 0 3-4 3-4 6M16 16v2" stroke="#fff" strokeWidth="2" />
                    </svg>
                </div>
                <div className="flex-1 min-h-0 flex flex-col pl-[46px]">
                    <p className="mt-[21px] h-5 leading-5 text-sm text-[#2266aa] whitespace-nowrap">浏览6 次 | 1 回答 | 0 答得好 | 0问得好</p>
                    <p className="mt-[16px] h-[24px] leading-6 text-base text-[#444] whitespace-nowrap">如图所示，梁相交处的箍筋怎么画呀？又没有标注…</p>
                    <NodePhoto />
                </div>
            </main>
        </div>
        <div className="absolute right-0 top-[514px] w-[19px] overflow-hidden flex flex-col gap-[10px]">
            <button type="button" aria-label="返回顶部" className="w-10 h-10 bg-[#bdbdbd] flex items-center justify-center shrink-0">
                <svg viewBox="0 0 24 24" className="w-6 h-6" fill="none"><path d="M2 3h20M12 6v17M2 16L12 6l10 10" stroke="#fff" strokeWidth="2" /></svg>
            </button>
            {sideTabs.map(([a, b]) => (
                <a key={a} href="#" className="w-10 h-10 bg-[#ff6a00] text-white text-sm leading-[18px] pt-[1px] pl-[6px] whitespace-nowrap">{a}<br />{b}</a>
            ))}
        </div>
    </section>
);

const Arrows = () => (
    <svg viewBox="0 0 1546 751" preserveAspectRatio="xMinYMin slice" className="absolute inset-0 w-full h-full pointer-events-none" aria-hidden="true">
        <path d="M1130 470L874 207M864 197L630 305" stroke="#f00" strokeWidth="3" fill="none" />
        <path d="M864 197l18 9-9 9zM617 311l13-13 6 12z" fill="#f00" />
    </svg>
);

export default function App() {
    return (
        <div className="relative grid grid-cols-[893fr_653fr] grid-rows-[minmax(0,1fr)] h-screen w-full overflow-hidden font-['Liberation_Sans','Noto_Sans_CJK_SC',sans-serif]">
            <DraftWindow />
            <BrowserWindow />
            <FloatBar />
            <Arrows />
        </div>
    );
}
